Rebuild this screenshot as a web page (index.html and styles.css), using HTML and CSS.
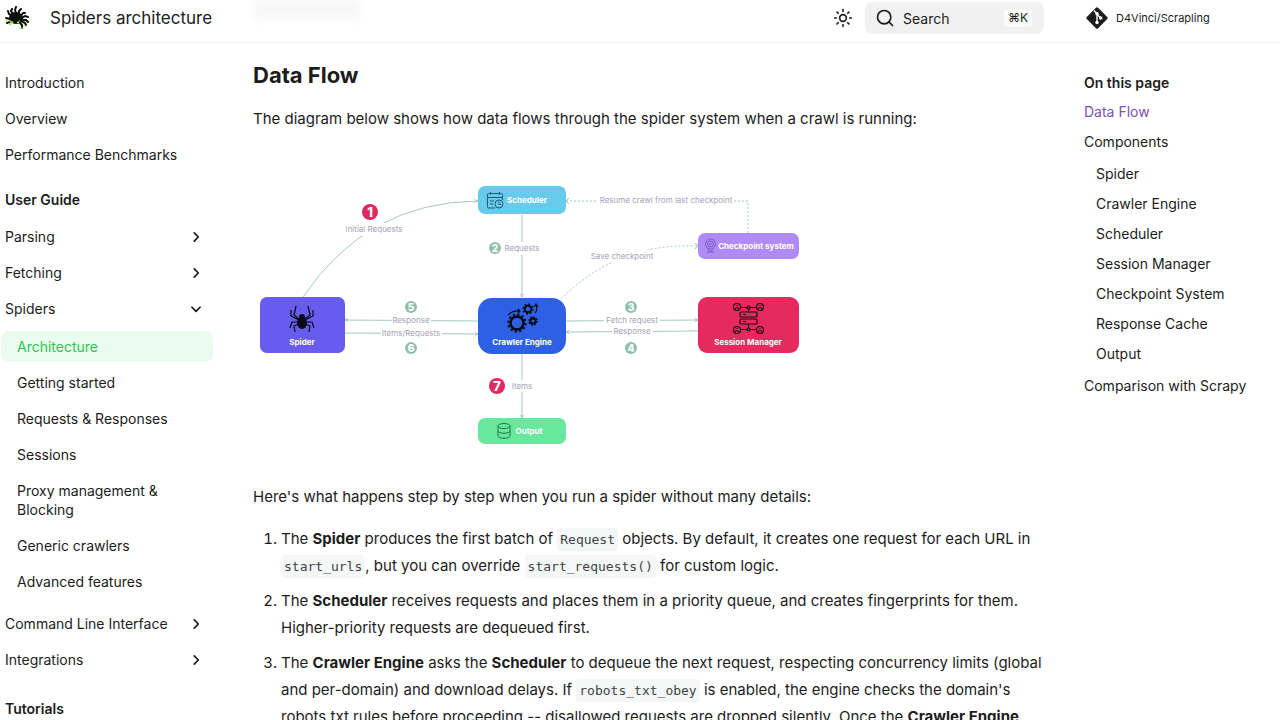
FILE: index.html
```html
<!DOCTYPE html>
<html lang="en">
  <head>
    <meta charset="utf-8">
    <title>Spiders architecture - Scrapling</title>
    <meta name="viewport" content="width=device-width, initial-scale=1">
    <link rel="stylesheet" href="styles.css">
  </head>
  <body>
    <header class="header">
      <a class="logo" href="#" aria-label="Scrapling">
        <svg viewBox="0 0 24 24" width="24" height="24">
          <g fill="none" stroke="#0b0f08" stroke-width="2" stroke-linecap="round" stroke-linejoin="round">
            <path d="M6 9L4 8 3 5M8 8L6 5 7 3M11 7L10 4 11 1M14 8L14 5 16 3M16 10L18 7 20 7M17 12L20 10 23 11M17 14L21 14 23 16M16 15L20 17 21 19M14 16L17 19 17 22"/>
            <path d="M5 13L1 12M5 16L2 17"/>
          </g>
          <ellipse cx="11" cy="12" rx="7" ry="6" fill="#0b0f08"/>
          <path d="M4 14l5 2-3 2zM11 17l4-3-1 3z" fill="#8be234"/>
          <path d="M1 13l1 2M4 18l2 1M15 22l3 0M19 20l2 0" stroke="#8be234" stroke-linecap="round"/>
        </svg>
      </a>
      <span class="header-title">Spiders architecture</span>
      <div class="header-main">
        <span class="scrolled-heading"></span>
        <div class="header-tools">
          <button class="icon-button" aria-label="Switch to dark mode">
            <svg viewBox="0 0 24 24" width="20" height="20" fill="none" stroke="currentColor" stroke-width="2" stroke-linecap="round">
              <circle cx="12" cy="12" r="4"/>
              <path d="M12 2v2M12 20v2M4.9 4.9l1.4 1.4M17.7 17.7l1.4 1.4M2 12h2M20 12h2M6.3 17.7l-1.4 1.4M19.1 4.9l-1.4 1.4"/>
            </svg>
          </button>
          <button class="search">
            <svg viewBox="0 0 24 24" width="20" height="20" fill="none" stroke="currentColor" stroke-width="2" stroke-linecap="round">
              <circle cx="11" cy="11" r="8"/>
              <path d="M21 21l-4.3-4.3"/>
            </svg>
            <span class="search-label">Search</span>
            <kbd>⌘K</kbd>
          </button>
        </div>
      </div>
      <a class="repo" href="#">
        <svg viewBox="0 0 24 24" width="22" height="22">
          <path d="M10.8.9L.9 10.8a1.7 1.7 0 0 0 0 2.4l9.9 9.9a1.7 1.7 0 0 0 2.4 0l9.9-9.9a1.7 1.7 0 0 0 0-2.4L13.2.9a1.7 1.7 0 0 0-2.4 0z" fill="#1c1c1c"/>
          <path d="M8.6 3.8l3.4 3.4v10M12 8l4 4" fill="none" stroke="#fff" stroke-width="1.5"/>
          <circle cx="12" cy="7.4" r="1.9" fill="#fff"/>
          <circle cx="16" cy="12" r="1.9" fill="#fff"/>
          <circle cx="12" cy="17" r="1.9" fill="#fff"/>
        </svg>
        <span>D4Vinci/Scrapling</span>
      </a>
    </header>

    <div class="layout">
      <nav class="sidebar" aria-label="Navigation">
        <ul>
          <li><a href="#">Introduction</a></li>
          <li><a href="#">Overview</a></li>
          <li><a href="#">Performance Benchmarks</a></li>
        </ul>
        <h3>User Guide</h3>
        <ul class="section">
          <li><a href="#">Parsing <svg class="chevron" viewBox="0 0 24 24"><path d="M9 19l7-7-7-7"/></svg></a></li>
          <li><a href="#">Fetching <svg class="chevron" viewBox="0 0 24 24"><path d="M9 19l7-7-7-7"/></svg></a></li>
          <li>
            <a href="#">Spiders <svg class="chevron open" viewBox="0 0 24 24"><path d="M9 19l7-7-7-7"/></svg></a>
            <ul class="nested">
              <li><a class="active" href="#">Architecture</a></li>
              <li><a href="#">Getting started</a></li>
              <li><a href="#">Requests &amp; Responses</a></li>
              <li><a href="#">Sessions</a></li>
              <li><a href="#">Proxy management &amp; Blocking</a></li>
              <li><a href="#">Generic crawlers</a></li>
              <li><a href="#">Advanced features</a></li>
            </ul>
          </li>
          <li><a href="#">Command Line Interface <svg class="chevron" viewBox="0 0 24 24"><path d="M9 19l7-7-7-7"/></svg></a></li>
          <li><a href="#">Integrations <svg class="chevron" viewBox="0 0 24 24"><path d="M9 19l7-7-7-7"/></svg></a></li>
        </ul>
        <h3>Tutorials</h3>
      </nav>

      <main class="content">
        <h2 id="data-flow">Data Flow</h2>
        <p>The diagram below shows how data flows through the spider system when a crawl is running:</p>

        <svg class="diagram" viewBox="0 0 794 310" role="img" aria-label="Spider system data flow">
          <defs>
            <marker id="arrow" viewBox="0 0 6 6" refX="5" refY="3" markerWidth="5" markerHeight="5" orient="auto-start-reverse">
              <path d="M1 1l4 2-4 2" fill="none" stroke="#9bc0b5"/>
            </marker>
            <marker id="arrow-open" viewBox="0 0 6 6" refX="5" refY="3" markerWidth="6" markerHeight="6" orient="auto">
              <path d="M2 0l3 3-3 3" fill="none" stroke="#9bc0b5"/>
            </marker>
          </defs>

          <!-- connections -->
          <g class="wire">
            <path d="M50 147Q114 52 225 51" marker-end="url(#arrow)"/>
            <path d="M269 65V147" marker-end="url(#arrow)"/>
            <path d="M269 204V268" marker-end="url(#arrow)"/>
            <path d="M225 171L92 170" marker-end="url(#arrow)"/>
            <path d="M92 183L225 184" marker-end="url(#arrow)"/>
            <path d="M313 171L445 170" marker-end="url(#arrow)"/>
            <path d="M445 181L313 182" marker-end="url(#arrow)"/>
            <path class="dotted" d="M308 149Q365 92 445 96" marker-end="url(#arrow-open)"/>
            <path class="dotted" d="M495 83V51H313" marker-end="url(#arrow-open)"/>
          </g>

          <!-- wire labels -->
          <g fill="#fff">
            <rect x="90" y="73" width="62" height="13"/>
            <rect x="250" y="92" width="40" height="13"/>
            <rect x="256" y="230" width="26" height="12"/>
            <rect x="139" y="165" width="39" height="11"/>
            <rect x="128" y="178" width="61" height="11"/>
            <rect x="351" y="165" width="56" height="11"/>
            <rect x="359" y="176" width="41" height="11"/>
            <rect x="336" y="100" width="66" height="12"/>
            <rect x="345" y="44" width="136" height="12"/>
          </g>
          <g class="wire-label">
            <text x="121" y="82">Initial Requests</text>
            <text x="269" y="101">Requests</text>
            <text x="269" y="239">Items</text>
            <text x="158" y="173">Response</text>
            <text x="158" y="186">Items/Requests</text>
            <text x="379" y="173">Fetch request</text>
            <text x="379" y="184">Response</text>
            <text x="369" y="109">Save checkpoint</text>
            <text x="413" y="53">Resume crawl from last checkpoint</text>
          </g>

          <!-- step numbers -->
          <g class="step major">
            <circle cx="117" cy="62" r="8"/><text x="117" y="67">1</text>
            <circle cx="244" cy="236" r="8"/><text x="244" y="241">7</text>
          </g>
          <g class="step">
            <circle cx="242" cy="98" r="6"/><text x="242" y="102">2</text>
            <circle cx="378" cy="157" r="6"/><text x="378" y="161">3</text>
            <circle cx="378" cy="198" r="6"/><text x="378" y="202">4</text>
            <circle cx="158" cy="157" r="6"/><text x="158" y="161">5</text>
            <circle cx="158" cy="198" r="6"/><text x="158" y="202">6</text>
          </g>

          <!-- spider -->
          <rect x="7" y="147" width="85" height="56" rx="7" fill="#675ced"/>
          <g transform="translate(49 169)">
            <g fill="none" stroke="#0a0a14" stroke-width="1.2" stroke-linejoin="round">
              <path d="M-3 0L-8-4-6-13M-3 1L-11-3-11-9M-3 3L-10 3-12 9M-3 5L-8 7-7 13"/>
              <path d="M3 0L8-4 6-13M3 1L11-3 11-9M3 3L10 3 12 9M3 5L8 7 7 13"/>
            </g>
            <ellipse cy="4" rx="5" ry="6" fill="#0a0a14"/>
            <circle cy="-2" r="3" fill="#0a0a14"/>
          </g>
          <text class="node-label" x="49" y="195">Spider</text>

          <!-- scheduler -->
          <rect x="225" y="36" width="88" height="28" rx="7" fill="#68caec"/>
          <g fill="none" stroke="#1d5f74">
            <path d="M242 58H235.5a1 1 0 0 1-1-1V44.5a1 1 0 0 1 1-1H248.5a1 1 0 0 1 1 1V50M234.5 47.5h15M237.5 42v3M246.5 42v3M237 51h4M237 54h3"/>
            <circle cx="246" cy="54" r="4"/>
            <path d="M246 51.5V54.5h2"/>
          </g>
          <text class="node-label" x="274" y="53">Scheduler</text>

          <!-- checkpoint system -->
          <rect x="445" y="83" width="101" height="26" rx="7" fill="#b08bf8"/>
          <g fill="none" stroke="#6d50b0" stroke-width=".8">
            <circle cx="457.5" cy="94" r="5"/>
            <circle cx="457.5" cy="94" r="3"/>
            <path d="M456 94l1 1 2-2M455 99l2.5 3 2.5-3M454 102h7"/>
          </g>
          <text class="node-label" x="503" y="99">Checkpoint system</text>

          <!-- crawler engine -->
          <rect x="225" y="148" width="88" height="56" rx="14" fill="#2e60e6"/>
          <g fill="none" stroke="#05080f">
            <circle cx="264" cy="173" r="6.5" stroke-width="2.5"/>
            <circle cx="264" cy="173" r="8.6" stroke-width="2" stroke-dasharray="2.2 2.3"/>
            <circle cx="275" cy="159" r="3.3" stroke-width="2"/>
            <circle cx="275" cy="159" r="4.9" stroke-width="1.5" stroke-dasharray="1.9 1.9"/>
            <circle cx="280" cy="171" r="2.6" stroke-width="2"/>
            <circle cx="280" cy="171" r="4.1" stroke-width="1.5" stroke-dasharray="1.6 1.6"/>
            <path d="M255 165Q260 160 267 161M265 159l2 2-2 2M282 163Q285 160 283 155M281 157l2-3 2 3" stroke-width="1.1"/>
          </g>
          <text class="node-label" x="269" y="195">Crawler Engine</text>

          <!-- session manager -->
          <rect x="445" y="147" width="101" height="56" rx="9" fill="#e52a60"/>
          <g fill="none" stroke="#1c0810" stroke-width="1.2">
            <rect x="487" y="162" width="17" height="5" rx="1"/>
            <rect x="487" y="169" width="17" height="5" rx="1"/>
            <path d="M490 164.5h3M490 171.5h3M495.5 159v3M495.5 174v4M488 157.5h6M497 157.5h6M488 179.5h6M497 179.5h6"/>
            <circle cx="495.5" cy="157.5" r="1.5"/>
            <circle cx="495.5" cy="179.5" r="1.5"/>
            <circle cx="484" cy="157" r="3.5"/>
            <circle cx="507" cy="157" r="3.5"/>
            <circle cx="484" cy="180" r="3.5"/>
            <circle cx="507" cy="180" r="3.5"/>
            <path d="M482 159q2-3 4 0M505 159q2-3 4 0M482 182q2-3 4 0M505 182q2-3 4 0M484 155v1M507 155v1M484 178v1M507 178v1"/>
          </g>
          <text class="node-label" x="495" y="195">Session Manager</text>

          <!-- output -->
          <rect x="225" y="268" width="88" height="26" rx="7" fill="#68e89c"/>
          <g fill="none" stroke="#24784a">
            <ellipse cx="251" cy="276" rx="6" ry="2.5"/>
            <path d="M245 276v10c0 3 12 3 12 0v-10M245 281c0 3 12 3 12 0"/>
          </g>
          <text class="node-label" x="276" y="284">Output</text>
        </svg>

        <p>Here's what happens step by step when you run a spider without many details:</p>
        <ol>
          <li>The <strong>Spider</strong> produces the first batch of <code>Request</code> objects. By default, it creates one request for each URL in <code>start_urls</code>, but you can override <code>start_requests()</code> for custom logic.</li>
          <li>The <strong>Scheduler</strong> receives requests and places them in a priority queue, and creates fingerprints for them. Higher-priority requests are dequeued first.</li>
          <li>The <strong>Crawler Engine</strong> asks the <strong>Scheduler</strong> to dequeue the next request, respecting concurrency limits (global and per-domain) and download delays. If <code>robots_txt_obey</code> is enabled, the engine checks the domain's robots.txt rules before proceeding -- disallowed requests are dropped silently. Once the <strong>Crawler Engine</strong></li>
        </ol>
      </main>

      <nav class="toc" aria-label="On this page">
        <h3>On this page</h3>
        <ul>
          <li><a class="active" href="#data-flow">Data Flow</a></li>
          <li>
            <a href="#">Components</a>
            <ul>
              <li><a href="#">Spider</a></li>
              <li><a href="#">Crawler Engine</a></li>
              <li><a href="#">Scheduler</a></li>
              <li><a href="#">Session Manager</a></li>
              <li><a href="#">Checkpoint System</a></li>
              <li><a href="#">Response Cache</a></li>
              <li><a href="#">Output</a></li>
            </ul>
          </li>
          <li><a href="#">Comparison with Scrapy</a></li>
        </ul>
      </nav>
    </div>
  </body>
</html>
```
FILE: styles.css
```css
* {
  box-sizing: border-box;
}

body {
  margin: 0;
  height: 100vh;
  overflow: hidden;
  font-family: Inter, "Liberation Sans", sans-serif;
  font-size: 15px;
  line-height: 27px;
  color: #1c1c1c;
  background: #fff;
}

a {
  color: inherit;
  text-decoration: none;
}

ul {
  list-style: none;
  margin: 0;
  padding: 0;
}

button {
  border: none;
  padding: 0;
  font: inherit;
  color: inherit;
  cursor: pointer;
}

svg {
  display: block;
  flex-shrink: 0;
}

/* Header */
.header {
  display: flex;
  align-items: center;
  height: 43px;
  padding: 0 12px 6px 5px;
  border-bottom: 1px solid #f2f2f2;
}

.logo {
  width: 45px;
}

.header-title {
  width: 203px;
  font-size: 17px;
}

.header-main {
  flex: 1;
  display: flex;
  justify-content: space-between;
  align-items: center;
}

.scrolled-heading {
  width: 107px;
  height: 18px;
  margin-bottom: 16px;
  background: #f7f7f7;
  filter: blur(4px);
}

.header-tools {
  display: flex;
  align-items: center;
  gap: 12px;
}

.icon-button {
  background: none;
}

.search {
  display: flex;
  align-items: center;
  width: 179px;
  height: 32px;
  padding: 0 12px 0 10px;
  gap: 8px;
  border-radius: 8px;
  background: #f1f1f1;
  font-size: 14px;
}

.search-label {
  flex: 1;
  text-align: left;
}

.search kbd {
  padding: 0 4px;
  border-radius: 4px;
  background: #fafafa;
  font: 12px/18px Inter, "DejaVu Sans", sans-serif;
}

.repo {
  display: flex;
  align-items: center;
  width: 182px;
  margin-left: 42px;
  gap: 8px;
  font-size: 11px;
}

/* Columns */
.layout {
  display: grid;
  grid-template-columns: 213px minmax(0, 1fr) 196px;
}

.sidebar,
.toc {
  font-size: 14px;
  line-height: 19px;
}

.sidebar h3,
.toc h3 {
  margin: 0;
  font-size: 14px;
  font-weight: 600;
}

/* Sidebar */
.sidebar {
  padding-top: 24px;
}

.sidebar ul {
  display: flex;
  flex-direction: column;
  gap: 5px;
}

.sidebar a {
  display: flex;
  justify-content: space-between;
  align-items: center;
  padding: 6px 10px 6px 5px;
}

.sidebar h3 {
  padding: 20px 5px 12px;
}

.sidebar .section {
  margin-bottom: 4px;
}

.sidebar .nested {
  margin: 7px 0 6px;
}

.sidebar .nested a {
  margin-left: 1px;
  padding: 6px 40px 6px 16px;
  border-radius: 8px;
}

.sidebar .nested .active {
  color: #2fc553;
  background: #eafcf0;
}

.chevron {
  width: 14px;
  height: 14px;
  fill: none;
  stroke: currentColor;
  stroke-width: 3;
  stroke-linecap: round;
  stroke-linejoin: round;
}

.chevron.open {
  transform: rotate(90deg);
}

/* Article */
.content {
  padding: 18px 37px 0 40px;
}

.content h2 {
  margin: 0 0 16px;
  font-size: 22px;
  line-height: 28px;
  font-weight: 700;
}

.content p {
  margin: 0;
}

.diagram {
  width: 100%;
  margin: 18px 0 23px;
}

.content ol {
  margin: 15px 0 0;
  padding-left: 28px;
}

.content li {
  margin-bottom: 8px;
}

.content strong {
  font-weight: 700;
}

.content code {
  padding: 4px 3px;
  border-radius: 4px;
  background: #f5f6f6;
  color: #3c4548;
  font-family: "DejaVu Sans Mono", "Liberation Mono", monospace;
  font-size: 13px;
  line-height: 16px;
}

/* Diagram */
.wire path {
  fill: none;
  stroke: #a5c9c0;
}

.wire .dotted {
  stroke-dasharray: 2 2;
}

.wire-label {
  fill: #a3a3b3;
  font-size: 8px;
  text-anchor: middle;
}

.node-label {
  fill: #fff;
  font-size: 8px;
  font-weight: 700;
  text-anchor: middle;
}

.step {
  fill: #92bfad;
  font-size: 10px;
  font-weight: 800;
  text-anchor: middle;
}

.step text {
  fill: #fff;
}

.step.major {
  fill: #dd2b60;
  font-size: 13px;
}

/* Table of contents */
.toc {
  padding-top: 30px;
}

.toc h3 {
  margin-bottom: 10px;
}

.toc a {
  display: block;
  margin-bottom: 11px;
}

.toc ul ul {
  margin: 13px 0;
  padding-left: 12px;
}

.toc .active {
  color: #7e4fb5;
}
```
